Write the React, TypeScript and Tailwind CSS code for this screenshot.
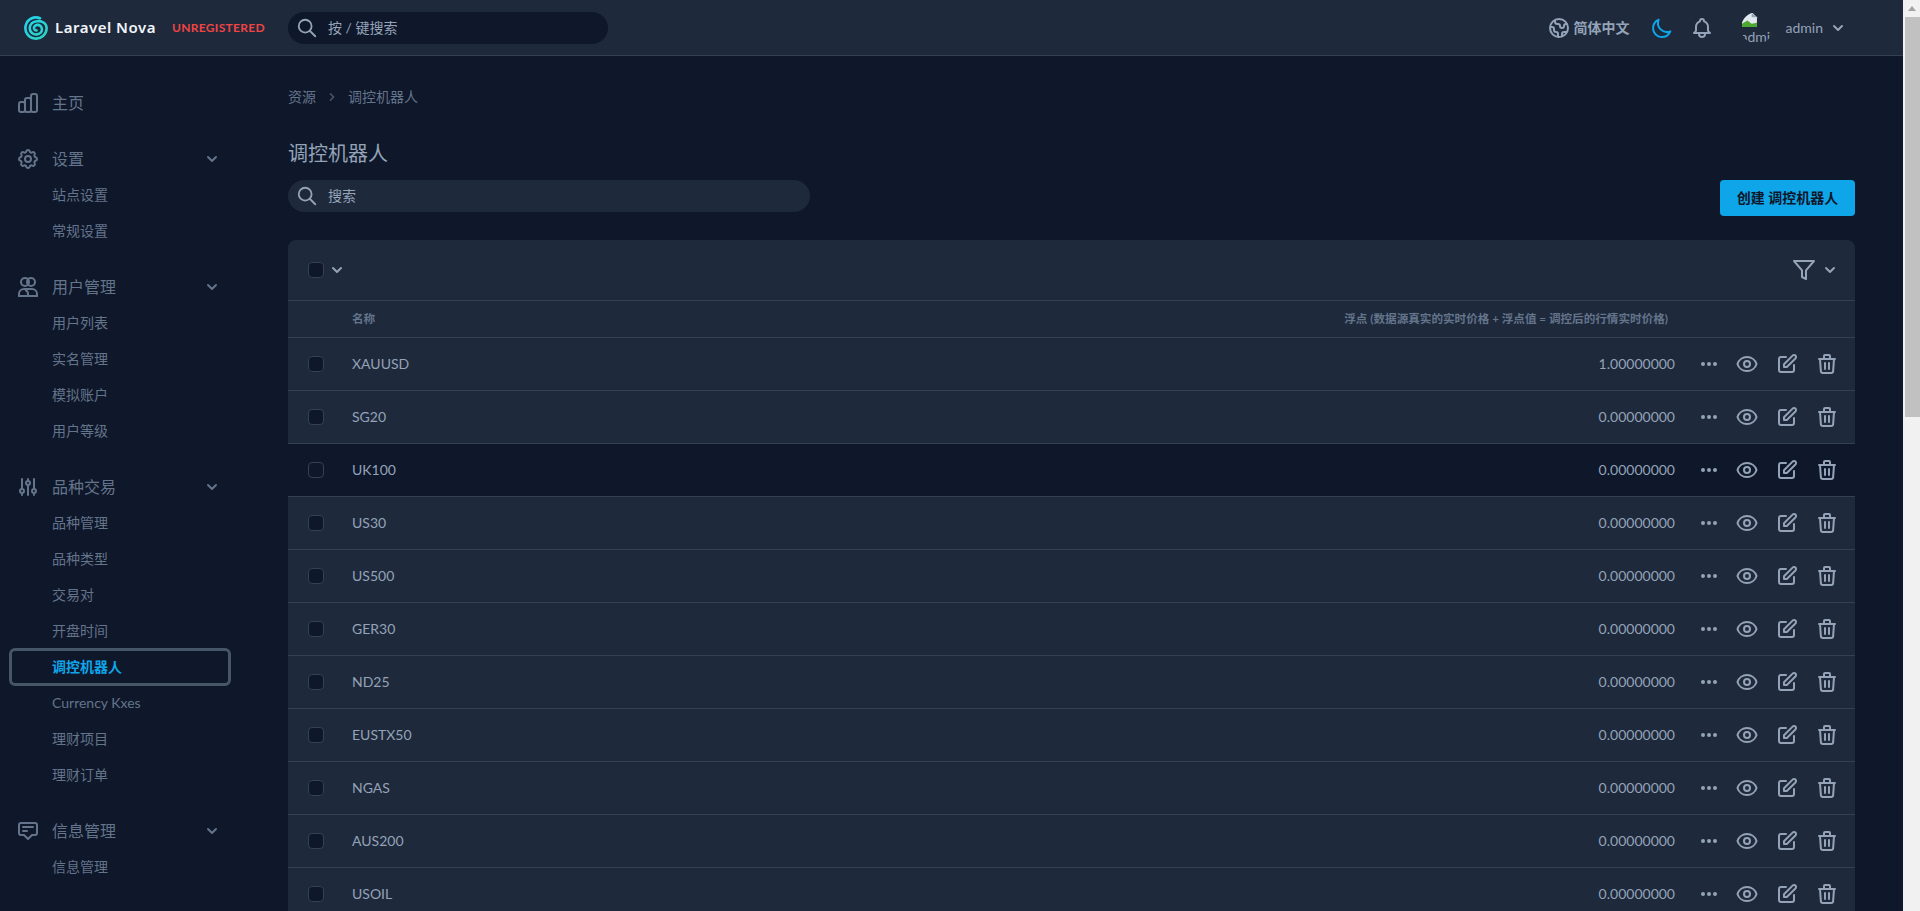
import type { ReactNode } from "react";
import { FiFilter } from "react-icons/fi";
import {
  HiChevronDown,
  HiChevronRight,
  HiDotsHorizontal,
  HiOutlineAdjustments,
  HiOutlineAnnotation,
  HiOutlineBell,
  HiOutlineChartBar,
  HiOutlineCog,
  HiOutlineEye,
  HiOutlineGlobe,
  HiOutlineMoon,
  HiOutlinePencilAlt,
  HiOutlineSearch,
  HiOutlineTrash,
} from "react-icons/hi";

const rows = [
  { name: "XAUUSD", value: "1.00000000" },
  { name: "SG20", value: "0.00000000" },
  { name: "UK100", value: "0.00000000", hover: true },
  { name: "US30", value: "0.00000000" },
  { name: "US500", value: "0.00000000" },
  { name: "GER30", value: "0.00000000" },
  { name: "ND25", value: "0.00000000" },
  { name: "EUSTX50", value: "0.00000000" },
  { name: "NGAS", value: "0.00000000" },
  { name: "AUS200", value: "0.00000000" },
  { name: "USOIL", value: "0.00000000" },
];

function UsersIcon() {
  return (
    <svg viewBox="0 0 24 24" fill="none" stroke="currentColor" strokeWidth={2} className="h-6 w-6">
      <circle cx="9" cy="7" r="4" />
      <circle cx="15" cy="7" r="4" />
      <path d="M3 21v-2a5 5 0 0 1 5-5h8a5 5 0 0 1 5 5v2zM12 21v-2a4 4 0 0 0-3-4" />
    </svg>
  );
}

function NovaLogo() {
  return (
    <svg viewBox="0 0 24 24" fill="none" strokeWidth={2.6} strokeLinecap="round" className="h-6 w-6 shrink-0">
      <defs>
        <linearGradient id="nova" x1="0" y1="0" x2="1" y2="1">
          <stop offset="0" stopColor="#22d3ee" />
          <stop offset="1" stopColor="#2dd4bf" />
        </linearGradient>
      </defs>
      <path
        stroke="url(#nova)"
        d="M16 2.2A10.6 10.6 0 1 0 22.6 12C22.6 7.6 18.4 4.6 13 5.2M13 5.2C8.6 5.4 5.6 8.6 5.7 12.4C5.9 16.2 9.2 18.8 12.8 18.4C16 18 18.1 15.6 17.9 13C17.7 10.4 15.4 8.6 13 8.9C11 9.2 9.7 11 10.1 12.8C10.4 14 11.4 14.6 12.6 14.5"
      />
    </svg>
  );
}

function BrokenAvatar() {
  return (
    <div className="h-8 w-8 shrink-0 overflow-hidden rounded-full">
      <svg viewBox="0 0 16 16" className="block h-[17px] w-[17px]">
        <path d="M3 1h8l4 4v9H1V3z" fill="#e2e8f0" />
        <path d="M1 14v-3l5-3 4 3 5-1v4z" fill="#4ea72e" />
        <path d="M10 1v4h5" fill="#94a3b8" />
      </svg>
      <div className="text-sm leading-4 whitespace-nowrap text-[#94a3b8]">admin</div>
    </div>
  );
}

function Checkbox() {
  return <span className="block h-4 w-4 rounded border border-[#334155] bg-[#0f172a]" />;
}

function NavGroup({
  icon,
  title,
  items,
  active,
}: {
  icon: ReactNode;
  title: string;
  items?: string[];
  active?: string;
}) {
  return (
    <div className="mb-5">
      <div className="flex h-9 items-center pr-[18px] pl-4 text-[#64748b]">
        <span className="w-9 shrink-0">{icon}</span>
        <span className="flex-1 text-base">{title}</span>
        {items && <HiChevronDown className="h-5 w-5" />}
      </div>
      {items?.map((item) =>
        item === active ? (
          <div
            key={item}
            className="mx-[9px] -my-px flex h-[38px] items-center rounded-md border-[3px] border-[#475569] pl-[40px] text-sm font-bold text-[#0ea5e9]"
          >
            {item}
          </div>
        ) : (
          <div key={item} className="flex h-9 items-center pl-[52px] text-sm text-[#64748b]">
            {item}
          </div>
        ),
      )}
    </div>
  );
}

function Sidebar() {
  return (
    <aside className="w-[288px] shrink-0 pt-[29px] pr-[48px]">
      <NavGroup icon={<HiOutlineChartBar className="h-6 w-6" />} title="主页" />
      <NavGroup icon={<HiOutlineCog className="h-6 w-6" />} title="设置" items={["站点设置", "常规设置"]} />
      <NavGroup
        icon={<UsersIcon />}
        title="用户管理"
        items={["用户列表", "实名管理", "模拟账户", "用户等级"]}
      />
      <NavGroup
        icon={<HiOutlineAdjustments className="h-6 w-6" />}
        title="品种交易"
        active="调控机器人"
        items={["品种管理", "品种类型", "交易对", "开盘时间", "调控机器人", "Currency Kxes", "理财项目", "理财订单"]}
      />
      <NavGroup icon={<HiOutlineAnnotation className="h-6 w-6" />} title="信息管理" items={["信息管理"]} />
    </aside>
  );
}

function Header() {
  return (
    <header className="flex h-14 shrink-0 items-center border-b border-[#334155] bg-[#1e293b] pr-[55px] pl-6">
      <NovaLogo />
      <span className="ml-[7px] w-[117px] font-['Noto_Sans',sans-serif] text-[15px] font-semibold tracking-[0.5px] text-[#f1f5f9]">
        Laravel Nova
      </span>
      <span className="w-[116px] text-xs font-bold tracking-[0.3px] text-[#ef4444]">UNREGISTERED</span>
      <div className="flex h-8 w-[320px] items-center rounded-full bg-[#0f172a] pl-2 text-sm text-[#94a3b8]">
        <HiOutlineSearch className="h-[22px] w-[22px]" />
        <span className="ml-[10px]">按 / 键搜索</span>
      </div>
      <div className="ml-auto flex items-center text-[#94a3b8]">
        <HiOutlineGlobe className="h-6 w-6" />
        <span className="ml-[3px] text-sm font-bold">简体中文</span>
        <HiOutlineMoon className="ml-[20px] h-6 w-6 text-[#0ea5e9]" />
        <HiOutlineBell className="ml-4 h-6 w-6" />
        <div className="ml-[27px]">
          <BrokenAvatar />
        </div>
        <span className="ml-[13px] text-sm">admin</span>
        <HiChevronDown className="ml-[5px] h-5 w-5" />
      </div>
    </header>
  );
}

function ResourceTable() {
  return (
    <div className="mt-6 overflow-hidden rounded-t-lg bg-[#1e293b]">
      <div className="flex h-[61px] items-center border-b border-[#334155] pr-[15px] pl-5">
        <Checkbox />
        <HiChevronDown className="ml-[3px] h-5 w-5 text-[#94a3b8]" />
        <FiFilter className="ml-auto h-6 w-6 text-[#94a3b8]" />
        <HiChevronDown className="ml-1 h-5 w-5 text-[#94a3b8]" />
      </div>
      <div className="flex h-[37px] items-center border-b border-[#334155] pr-[187px] pl-16 text-[11.6px] font-bold text-[#64748b]">
        <span>名称</span>
        <span className="ml-auto">浮点 (数据源真实的实时价格 + 浮点值 = 调控后的行情实时价格)</span>
      </div>
      {rows.map((row) => (
        <div
          key={row.name}
          className={`flex h-[53px] items-center border-b border-[#334155] pr-4 pl-5 text-sm text-[#94a3b8] ${
            row.hover ? "bg-[#0f172a]" : ""
          }`}
        >
          <Checkbox />
          <span className="ml-7">{row.name}</span>
          <span className="ml-auto">{row.value}</span>
          <div className="ml-6 flex items-center gap-[17px]">
            <HiDotsHorizontal className="h-5 w-5" />
            <HiOutlineEye className="ml-[-1px] h-6 w-6" />
            <HiOutlinePencilAlt className="ml-[-1px] h-6 w-6" />
            <HiOutlineTrash className="ml-[-1px] h-6 w-6" />
          </div>
        </div>
      ))}
    </div>
  );
}

export default function App() {
  return (
    <div className="flex h-[911px] overflow-hidden bg-[#0f172a] font-['Lato','Noto_Sans_CJK_SC',sans-serif]">
      <div className="flex w-[1903px] shrink-0 flex-col">
        <Header />
        <div className="flex min-h-0 flex-1">
          <Sidebar />
          <main className="w-[1567px] shrink-0 pt-[31px]">
            <div className="flex items-center text-sm text-[#64748b]">
              <span>资源</span>
              <HiChevronRight className="mx-2 h-4 w-4 text-[#475569]" />
              <span>调控机器人</span>
            </div>
            <h1 className="mt-8 text-xl leading-7 text-[#94a3b8]">调控机器人</h1>
            <div className="mt-[13px] flex items-start justify-between">
              <div className="flex h-8 w-[522px] items-center rounded-full bg-[#1e293b] pl-2 text-sm text-[#94a3b8]">
                <HiOutlineSearch className="h-[22px] w-[22px]" />
                <span className="ml-[10px]">搜索</span>
              </div>
              <button className="h-9 w-[135px] rounded bg-[#0ea5e9] text-sm font-bold text-[#0f172a]">
                创建 调控机器人
              </button>
            </div>
            <ResourceTable />
          </main>
        </div>
      </div>
      <div className="flex w-[17px] shrink-0 flex-col bg-[#f1f1f1]">
        <div className="flex h-[17px] items-center justify-center">
          <span className="h-0 w-0 border-x-4 border-b-[5px] border-x-transparent border-b-[#a3a3a3]" />
        </div>
        <div className="ml-[2px] h-[400px] bg-[#c1c1c1]" />
      </div>
    </div>
  );
}
